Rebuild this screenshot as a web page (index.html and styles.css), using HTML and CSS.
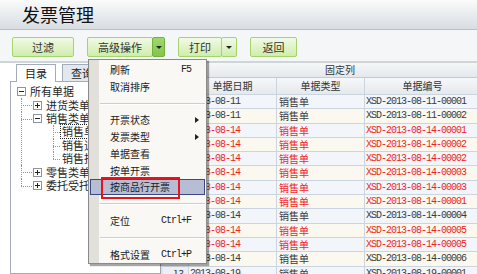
FILE: index.html
```html
<!DOCTYPE html>
<html lang="zh-CN">
<head>
    <meta charset="UTF-8">
    <title>发票管理</title>
    <link rel="stylesheet" href="styles.css">
</head>
<body>
    <!-- Title bar -->
    <div class="header">
        <h1>发票管理</h1>
    </div>

    <!-- Toolbar -->
    <div class="toolbar">
        <button class="btn btn-filter">过滤</button>
        <div class="split">
            <button class="btn btn-adv">高级操作</button>
            <button class="btn btn-drop open"><span class="caret"></span></button>
        </div>
        <div class="split">
            <button class="btn btn-print">打印</button>
            <button class="btn btn-drop wide"><span class="caret"></span></button>
        </div>
        <button class="btn btn-back">返回</button>
    </div>

    <div class="main">
        <!-- Left: tabs + tree -->
        <div class="side">
            <div class="tabs">
                <span class="tab active">目录</span>
                <span class="tab">查询</span>
            </div>
            <div class="tree">
                <ul>
                    <li>
                        <div class="node"><span class="tg minus"></span>所有单据</div>
                        <ul>
                            <li><div class="node"><span class="tg plus"></span>进货类单据</div></li>
                            <li>
                                <div class="node"><span class="tg minus"></span>销售类单据</div>
                                <ul class="leaves">
                                    <li><div class="node"><span class="lbl sel">销售单</span></div></li>
                                    <li><div class="node"><span class="lbl">销售退货单</span></div></li>
                                    <li><div class="node"><span class="lbl">销售报价单</span></div></li>
                                </ul>
                            </li>
                            <li><div class="node"><span class="tg plus"></span>零售类单据</div></li>
                            <li><div class="node"><span class="tg plus"></span>委托受托单据</div></li>
                        </ul>
                    </li>
                </ul>
            </div>
        </div>

        <div class="splitter"></div>

        <!-- Right: data grid -->
        <div class="grid">
            <div class="band">固定列</div>
            <div class="grow ghead">
                <div class="cell num"></div>
                <div class="cell">单据日期</div>
                <div class="cell">单据类型</div>
                <div class="cell">单据编号</div>
            </div>
            <div class="grow"><div class="cell num">1</div><div class="cell code">2013-08-11</div><div class="cell">销售单</div><div class="cell code">XSD-2013-08-11-00001</div></div>
            <div class="grow"><div class="cell num">2</div><div class="cell code">2013-08-11</div><div class="cell">销售单</div><div class="cell code">XSD-2013-08-11-00002</div></div>
            <div class="grow red"><div class="cell num">3</div><div class="cell code">2013-08-14</div><div class="cell">销售单</div><div class="cell code">XSD-2013-08-14-00001</div></div>
            <div class="grow red"><div class="cell num">4</div><div class="cell code">2013-08-14</div><div class="cell">销售单</div><div class="cell code">XSD-2013-08-14-00002</div></div>
            <div class="grow red"><div class="cell num">5</div><div class="cell code">2013-08-14</div><div class="cell">销售单</div><div class="cell code">XSD-2013-08-14-00002</div></div>
            <div class="grow red"><div class="cell num">6</div><div class="cell code">2013-08-14</div><div class="cell">销售单</div><div class="cell code">XSD-2013-08-14-00003</div></div>
            <div class="grow red"><div class="cell num">7</div><div class="cell code">2013-08-14</div><div class="cell">销售单</div><div class="cell code">XSD-2013-08-14-00003</div></div>
            <div class="grow red"><div class="cell num">8</div><div class="cell code">2013-08-14</div><div class="cell">销售单</div><div class="cell code">XSD-2013-08-14-00001</div></div>
            <div class="grow"><div class="cell num">9</div><div class="cell code">2013-08-14</div><div class="cell">销售单</div><div class="cell code">XSD-2013-08-14-00004</div></div>
            <div class="grow red"><div class="cell num">10</div><div class="cell code">2013-08-14</div><div class="cell">销售单</div><div class="cell code">XSD-2013-08-14-00005</div></div>
            <div class="grow red"><div class="cell num">11</div><div class="cell code">2013-08-14</div><div class="cell">销售单</div><div class="cell code">XSD-2013-08-14-00005</div></div>
            <div class="grow"><div class="cell num">12</div><div class="cell code">2013-08-14</div><div class="cell">销售单</div><div class="cell code">XSD-2013-08-14-00006</div></div>
            <div class="grow"><div class="cell num">13</div><div class="cell code">2013-08-19</div><div class="cell">销售单</div><div class="cell code">XSD-2013-08-19-00001</div></div>
        </div>
    </div>

    <!-- Dropdown of 高级操作 -->
    <div class="menu">
        <div class="mi">刷新<span class="key">F5</span></div>
        <div class="mi">取消排序</div>
        <div class="sep"></div>
        <div class="mi sub">开票状态</div>
        <div class="mi sub">发票类型</div>
        <div class="mi">单据查看</div>
        <div class="mi">按单开票</div>
        <div class="mi hover">按商品行开票</div>
        <div class="sep"></div>
        <div class="mi">定位<span class="key">Ctrl+F</span></div>
        <div class="sep"></div>
        <div class="mi">格式设置<span class="key">Ctrl+P</span></div>
    </div>

    <!-- red annotation box -->
    <div class="mark"></div>
</body>
</html>
```

FILE: styles.css
```css
* {
    box-sizing: border-box;
}
body {
    margin: 0;
    width: 477px;
    height: 274px;
    overflow: hidden;
    position: relative;
    font-family: "Noto Sans CJK SC", "DejaVu Sans", sans-serif;
    font-size: 10px;
    color: #222;
    background: #f6f7f8;
}

/* title bar */
.header {
    height: 30px;
    padding-left: 22px;
    border-bottom: 1px solid #b7c0c7;
    background: linear-gradient(#fafbfb, #d7dde1);
}
.header h1 {
    margin: 0;
    font-size: 18px;
    font-weight: normal;
    line-height: 29px;
    color: #111;
}

/* toolbar */
.toolbar {
    height: 33px;
    display: flex;
    align-items: flex-start;
    gap: 13px;
    padding: 7px 0 0 12px;
    border-bottom: 2px solid #d0d5d9;
    background: #f5f6f7;
}
.btn {
    height: 20px;
    padding: 0;
    border: 1px solid #a4d46e;
    border-radius: 2px;
    background: linear-gradient(#f1fae6, #d0edab);
    font-family: inherit;
    font-size: 11px;
    line-height: 18px;
    color: #333;
}
.btn-filter { width: 62px; }
.btn-adv { width: 66px; }
.btn-print { width: 44px; }
.btn-back { width: 47px; }
.split {
    display: flex;
}
.btn-drop {
    width: 13px;
    margin-left: -1px;
    display: flex;
    align-items: center;
    justify-content: center;
}
.btn-drop.wide { width: 16px; }
.btn-drop.open {
    border-color: #6fb33a;
    background: linear-gradient(#9fd86a, #82c64a);
}
.caret {
    width: 0;
    height: 0;
    border-left: 3px solid transparent;
    border-right: 3px solid transparent;
    border-top: 3px solid #222;
}

/* main split */
.main {
    display: flex;
    height: 211px;
}
.side {
    width: 160px;
    padding: 1px 0 0 10px;
    background: #fff;
    overflow: hidden;
}
.tabs {
    display: flex;
    gap: 6px;
    height: 17px;
    padding-left: 6px;
}
.tab {
    width: 40px;
    height: 17px;
    border: 1px solid #a4adb7;
    border-bottom: none;
    background: #e3e8ee;
    text-align: center;
    font-size: 11px;
    line-height: 16px;
    color: #222;
}
.tab.active {
    height: 18px;
    background: #fff;
    position: relative;
    z-index: 1;
}
.tree {
    height: 193px;
    padding: 3px 0 0 6px;
    border: 1px solid #a4adb7;
    border-right: none;
    background: #fff;
}
.tree ul {
    list-style: none;
    margin: 0;
    padding: 0;
}
.tree ul ul {
    padding-left: 16px;
}
.tree li {
    position: relative;
}
.tree ul ul > li::before {
    content: "";
    position: absolute;
    left: -12px;
    top: 7px;
    width: 11px;
    border-top: 1px dotted #8d949b;
}
.tree ul ul > li::after {
    content: "";
    position: absolute;
    left: -12px;
    top: 0;
    bottom: 0;
    border-left: 1px dotted #8d949b;
}
.tree ul ul > li:last-child::after {
    bottom: auto;
    height: 7px;
}
.tree ul.leaves > li::before {
    left: 4px;
    width: 7px;
}
.tree ul.leaves > li::after {
    left: 4px;
}
.node {
    height: 13.4px;
    display: flex;
    align-items: center;
    white-space: nowrap;
    font-size: 11px;
    line-height: 13px;
    color: #1e1e1e;
}
.tg {
    width: 9px;
    height: 9px;
    margin-right: 4px;
    border: 1px solid #8d949b;
    background: #fff;
    position: relative;
    z-index: 1;
}
.tg::before, .plus::after {
    content: "";
    position: absolute;
    left: 1px;
    top: 3px;
    width: 5px;
    border-top: 1px solid #222;
}
.plus::after {
    left: 3px;
    top: 1px;
    width: 0;
    height: 5px;
    border-top: none;
    border-left: 1px solid #222;
}
.lbl {
    margin-left: 11px;
    padding: 0 1px;
    border: 1px solid transparent;
}
.lbl.sel {
    border: 1px dotted #222;
}
.splitter {
    width: 3px;
    border-left: 1px solid #9aa3ac;
    background: #dfe3e7;
}

/* grid */
.grid {
    flex: 1;
    overflow: hidden;
    background: #fff;
}
.band {
    width: 318px;
    height: 15px;
    padding-left: 36px;
    border-bottom: 1px solid #c3ccd6;
    background: linear-gradient(#f6f7f9, #e4e8ec);
    text-align: center;
    line-height: 14px;
    color: #333;
}
.grow {
    display: grid;
    grid-template-columns: 26px 88px 88px 116px;
    height: 14.3px;
    line-height: 13px;
    color: #3a3a3a;
    background: #f2f5fa;
}
.grow:nth-child(even) {
    background: #fbf9ef;
}
.grow.ghead {
    height: 17px;
    line-height: 16px;
    background: linear-gradient(#f6f7f9, #e4e8ec);
    color: #333;
}
.ghead .cell {
    text-align: center;
    padding: 0;
}
.grow.red {
    color: #f21e1e;
}
.cell {
    padding: 0 2px;
    border-right: 1px solid #cbd4df;
    border-bottom: 1px solid #cbd4df;
    white-space: nowrap;
    overflow: hidden;
}
.cell.num {
    padding: 0 4px 0 0;
    text-align: right;
    background: #eceff3;
    color: #333;
}
.cell.code {
    padding-left: 1px;
    font-family: "Liberation Mono", monospace;
    letter-spacing: -1px;
}

/* dropdown menu */
.menu {
    position: absolute;
    left: 88px;
    top: 59px;
    width: 119px;
    padding: 1px 1px 0;
    border: 1px solid #8a8a8a;
    background: linear-gradient(to right, #e2e0da 10px, #f9f8f5 10px);
    box-shadow: 2px 2px 1px rgba(0, 0, 0, 0.35);
}
.mi {
    height: 16.8px;
    display: flex;
    align-items: center;
    padding: 0 13px 0 19px;
    border: 1px solid transparent;
    white-space: nowrap;
    color: #1a1a1a;
    position: relative;
}
.mi.hover {
    background: #b6bdd5;
    border-color: #3b4a86;
}
.key {
    margin-left: auto;
    font-family: "Liberation Mono", monospace;
    letter-spacing: -1px;
}
.mi.sub::after {
    content: "";
    position: absolute;
    right: 5px;
    top: 5px;
    border-left: 4px solid #222;
    border-top: 3.5px solid transparent;
    border-bottom: 3.5px solid transparent;
}
.sep {
    height: 16.8px;
    position: relative;
}
.sep::before {
    content: "";
    position: absolute;
    left: 10px;
    right: 0;
    top: 8px;
    border-top: 1px solid #cfcdc8;
    border-bottom: 1px solid #fff;
}

/* annotation */
.mark {
    position: absolute;
    left: 101px;
    top: 177px;
    width: 79px;
    height: 22px;
    border: 2px solid #e8141b;
}
```
